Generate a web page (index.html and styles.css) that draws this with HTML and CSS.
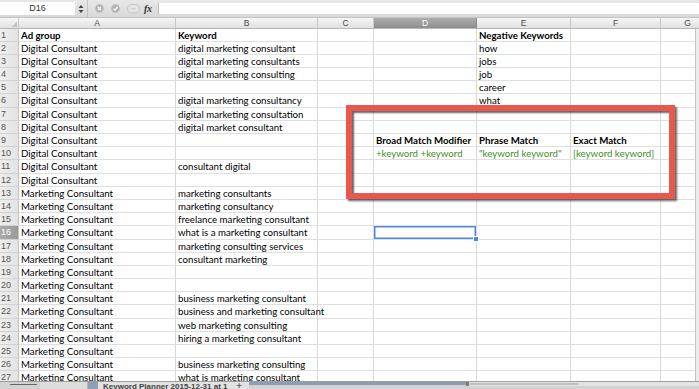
FILE: index.html
```html
<!DOCTYPE html>
<html>
<head>
<meta charset="utf-8">
<link rel="stylesheet" href="styles.css">
</head>
<body>
<div class="window">
  <div class="fbar">
    <div class="namebox">D16</div>
    <div class="stepper">
      <svg width="6" height="10" viewBox="0 0 6 10"><path d="M3 1 L5.5 4 H0.5 Z M3 9 L5.5 6 H0.5 Z" fill="#444"/></svg>
    </div>
    <div class="fbtns">
      <svg width="56" height="17" viewBox="0 0 56 17">
        <circle cx="12.5" cy="8.5" r="4.2" fill="#b4b4b4"/>
        <path d="M10.9 6.9 L14.1 10.1 M14.1 6.9 L10.9 10.1" stroke="#fff" stroke-width="1.2"/>
        <circle cx="28.5" cy="8.5" r="4.2" fill="#b4b4b4"/>
        <path d="M26.4 8.6 L28 10.2 L30.7 6.8" stroke="#fff" stroke-width="1.2" fill="none"/>
        <rect x="40.5" y="4.5" width="12" height="8.5" rx="4.25" fill="#e4e4e4" stroke="#c4c4c4"/>
        <path d="M44.5 8.7 H48.5" stroke="#c4c4c4"/>
      </svg>
      <span class="fx">fx</span>
    </div>
    <div class="finput"></div>
  </div>

  <div class="colheads">
    <div class="corner"></div>
    <div class="ch">A</div>
    <div class="ch">B</div>
    <div class="ch">C</div>
    <div class="ch on">D</div>
    <div class="ch">E</div>
    <div class="ch">F</div>
    <div class="ch">G</div>
  </div>

  <div class="body">
    <div class="rows">
      <div class="rh">1</div><div class="c b">Ad group</div><div class="c b">Keyword</div><div class="c"></div><div class="c"></div><div class="c b">Negative Keywords</div><div class="c"></div><div class="c"></div>
      <div class="rh">2</div><div class="c">Digital Consultant</div><div class="c">digital marketing consultant</div><div class="c"></div><div class="c"></div><div class="c">how</div><div class="c"></div><div class="c"></div>
      <div class="rh">3</div><div class="c">Digital Consultant</div><div class="c">digital marketing consultants</div><div class="c"></div><div class="c"></div><div class="c">jobs</div><div class="c"></div><div class="c"></div>
      <div class="rh">4</div><div class="c">Digital Consultant</div><div class="c">digital marketing consulting</div><div class="c"></div><div class="c"></div><div class="c">job</div><div class="c"></div><div class="c"></div>
      <div class="rh">5</div><div class="c">Digital Consultant</div><div class="c"></div><div class="c"></div><div class="c"></div><div class="c">career</div><div class="c"></div><div class="c"></div>
      <div class="rh">6</div><div class="c">Digital Consultant</div><div class="c">digital marketing consultancy</div><div class="c"></div><div class="c"></div><div class="c">what</div><div class="c"></div><div class="c"></div>
      <div class="rh">7</div><div class="c">Digital Consultant</div><div class="c">digital marketing consultation</div><div class="c"></div><div class="c"></div><div class="c"></div><div class="c"></div><div class="c"></div>
      <div class="rh">8</div><div class="c">Digital Consultant</div><div class="c">digital market consultant</div><div class="c"></div><div class="c"></div><div class="c"></div><div class="c"></div><div class="c"></div>
      <div class="rh">9</div><div class="c">Digital Consultant</div><div class="c"></div><div class="c"></div><div class="c b">Broad Match Modifier</div><div class="c b">Phrase Match</div><div class="c b">Exact Match</div><div class="c"></div>
      <div class="rh">10</div><div class="c">Digital Consultant</div><div class="c"></div><div class="c"></div><div class="c g">+keyword +keyword</div><div class="c g">"keyword keyword"</div><div class="c g">[keyword keyword]</div><div class="c"></div>
      <div class="rh">11</div><div class="c">Digital Consultant</div><div class="c">consultant digital</div><div class="c"></div><div class="c"></div><div class="c"></div><div class="c"></div><div class="c"></div>
      <div class="rh">12</div><div class="c">Digital Consultant</div><div class="c"></div><div class="c"></div><div class="c"></div><div class="c"></div><div class="c"></div><div class="c"></div>
      <div class="rh">13</div><div class="c">Marketing Consultant</div><div class="c">marketing consultants</div><div class="c"></div><div class="c"></div><div class="c"></div><div class="c"></div><div class="c"></div>
      <div class="rh">14</div><div class="c">Marketing Consultant</div><div class="c">marketing consultancy</div><div class="c"></div><div class="c"></div><div class="c"></div><div class="c"></div><div class="c"></div>
      <div class="rh">15</div><div class="c">Marketing Consultant</div><div class="c">freelance marketing consultant</div><div class="c"></div><div class="c"></div><div class="c"></div><div class="c"></div><div class="c"></div>
      <div class="rh on">16</div><div class="c">Marketing Consultant</div><div class="c">what is a marketing consultant</div><div class="c"></div><div class="c active"></div><div class="c"></div><div class="c"></div><div class="c"></div>
      <div class="rh">17</div><div class="c">Marketing Consultant</div><div class="c">marketing consulting services</div><div class="c"></div><div class="c"></div><div class="c"></div><div class="c"></div><div class="c"></div>
      <div class="rh">18</div><div class="c">Marketing Consultant</div><div class="c">consultant marketing</div><div class="c"></div><div class="c"></div><div class="c"></div><div class="c"></div><div class="c"></div>
      <div class="rh">19</div><div class="c">Marketing Consultant</div><div class="c"></div><div class="c"></div><div class="c"></div><div class="c"></div><div class="c"></div><div class="c"></div>
      <div class="rh">20</div><div class="c">Marketing Consultant</div><div class="c"></div><div class="c"></div><div class="c"></div><div class="c"></div><div class="c"></div><div class="c"></div>
      <div class="rh">21</div><div class="c">Marketing Consultant</div><div class="c">business marketing consultant</div><div class="c"></div><div class="c"></div><div class="c"></div><div class="c"></div><div class="c"></div>
      <div class="rh">22</div><div class="c">Marketing Consultant</div><div class="c">business and marketing consultant</div><div class="c"></div><div class="c"></div><div class="c"></div><div class="c"></div><div class="c"></div>
      <div class="rh">23</div><div class="c">Marketing Consultant</div><div class="c">web marketing consulting</div><div class="c"></div><div class="c"></div><div class="c"></div><div class="c"></div><div class="c"></div>
      <div class="rh">24</div><div class="c">Marketing Consultant</div><div class="c">hiring a marketing consultant</div><div class="c"></div><div class="c"></div><div class="c"></div><div class="c"></div><div class="c"></div>
      <div class="rh">25</div><div class="c">Marketing Consultant</div><div class="c"></div><div class="c"></div><div class="c"></div><div class="c"></div><div class="c"></div><div class="c"></div>
      <div class="rh">26</div><div class="c">Marketing Consultant</div><div class="c">business marketing consulting</div><div class="c"></div><div class="c"></div><div class="c"></div><div class="c"></div><div class="c"></div>
      <div class="rh">27</div><div class="c">Marketing Consultant</div><div class="c">what is marketing consultant</div><div class="c"></div><div class="c"></div><div class="c"></div><div class="c"></div><div class="c"></div>
    </div>
    <div class="vscroll"></div>
  </div>

  <div class="tabs">
    <div class="nav"><span class="navline"></span></div>
    <div class="prevtab"></div>
    <div class="tab"><span class="tabicon"></span><span class="tabtext">Keyword Planner 2015-12-31 at 1</span><span class="plus">+</span></div>
    <div class="hbar"></div>
    <div class="track"><span class="thumb"></span></div>
  </div>

  <div class="annot"></div>
</div>
</body>
</html>
```

FILE: styles.css
```css
html, body {
  margin: 0;
  padding: 0;
}
body {
  width: 699px;
  height: 389px;
  overflow: hidden;
  background: #fff;
  font-family: Lato, "Liberation Sans", sans-serif;
}
.window {
  position: relative;
  display: flex;
  flex-direction: column;
  width: 699px;
  height: 389px;
  overflow: hidden;
}

/* formula bar */
.fbar {
  flex: none;
  height: 18px;
  box-sizing: border-box;
  display: flex;
  align-items: center;
  background: linear-gradient(#e8e8e8, #d8d8d8);
  border-bottom: 1px solid #c4c4c4;
}
.namebox {
  width: 75px;
  height: 13px;
  background: #fff;
  font: 9px "Liberation Sans", sans-serif;
  line-height: 13px;
  color: #333;
  text-align: center;
}
.stepper {
  width: 13px;
  height: 17px;
  display: flex;
  align-items: center;
  justify-content: center;
  box-sizing: border-box;
  border-right: 1px solid #c2c2c2;
}
.fbtns {
  width: 70px;
  height: 17px;
  display: flex;
  align-items: center;
}
.fbtns svg {
  display: block;
  margin-left: -1px;
}
.fx {
  font: italic bold 10px "Liberation Serif", serif;
  color: #333;
  margin-left: 1px;
  letter-spacing: -0.3px;
}
.finput {
  flex: 1;
  height: 11px;
  background: #fff;
  border-left: 1px solid #b9b9b9;
}

/* column headers */
.colheads {
  flex: none;
  height: 10.5px;
  display: grid;
  grid-template-columns: 19px 157px 142px 56px 103px 94px 90px 54px;
  overflow: hidden;
}
.corner, .ch {
  box-sizing: border-box;
  border-right: 1px solid #c8c8c8;
  border-bottom: 1px solid #b8b8b8;
  background: linear-gradient(#f6f6f6, #e0e0e0);
}
.corner {
  background:
    linear-gradient(to top left, #c4c4c4 50%, transparent 50%) right 1px bottom 1px / 6px 6px no-repeat,
    linear-gradient(#f6f6f6, #e0e0e0);
}
.ch {
  font: 8.5px "Liberation Sans", sans-serif;
  line-height: 10px;
  color: #4a4a4a;
  text-align: center;
}
.ch.on {
  background: linear-gradient(#adadad, #8e8e8e);
  border-right-color: #8a8a8a;
  color: #fff;
}

/* rows */
.body {
  flex: none;
  height: 352.5px;
  display: flex;
  overflow: hidden;
}
.rows {
  flex: 1;
  display: grid;
  grid-template-columns: 19px 157px 142px 56px 103px 94px 90px 54px;
  grid-auto-rows: 13.2px;
  overflow: hidden;
}
.rh {
  box-sizing: border-box;
  background: linear-gradient(to right, #eeeeee, #e3e3e3);
  border-right: 1px solid #c2c2c2;
  border-bottom: 1px solid #d2d2d2;
  font: 9px "Liberation Sans", sans-serif;
  line-height: 13px;
  color: #555;
  padding-left: 1px;
}
.rh.on {
  background: linear-gradient(to right, #aaaaaa, #9a9a9a);
  color: #fff;
}
.c {
  box-sizing: border-box;
  border-right: 1px solid #d8d8d8;
  border-bottom: 1px solid #dfdfdf;
  font-size: 9.7px;
  line-height: 12.6px;
  padding-left: 2px;
  white-space: nowrap;
  color: #000;
}
.c.b {
  font-weight: bold;
}
.c.g {
  color: #3f9022;
}
.c.active {
  position: relative;
  box-shadow: inset 0 0 0 1.5px #4d8ae6;
}
.c.active::after {
  content: "";
  position: absolute;
  right: -3px;
  bottom: -3px;
  width: 4px;
  height: 4px;
  background: #4d8ae6;
  border: 1px solid #fff;
  z-index: 2;
}
.vscroll {
  flex: none;
  width: 4px;
  box-sizing: border-box;
  background: #ececec;
  border-left: 1px solid #c4c4c4;
}

/* sheet tabs + horizontal scrollbar */
.tabs {
  flex: none;
  height: 8px;
  box-sizing: border-box;
  display: flex;
  background: #d2d2d2;
  border-top: 1px solid #9d9d9d;
  overflow: hidden;
}
.nav {
  width: 40px;
  padding-top: 2px;
  box-sizing: border-box;
}
.navline {
  display: block;
  margin-left: 10px;
  width: 27px;
  height: 1px;
  background: #666;
}
.prevtab {
  width: 47px;
  background: #dcdcdc;
  border-right: 1px solid #b4b4b4;
}
.tab {
  width: 161px;
  display: flex;
  align-items: flex-start;
  background: #e2e2e2;
}
.tabicon {
  width: 10px;
  height: 7px;
  background: #8f9fb6;
}
.tabtext {
  margin-left: 5px;
  font: bold 8px "Liberation Sans", sans-serif;
  line-height: 10px;
  color: #444;
  white-space: nowrap;
}
.plus {
  margin-left: 9px;
  font: bold 9px "Liberation Sans", sans-serif;
  line-height: 9px;
  color: #666;
}
.hbar {
  width: 217px;
  height: 3px;
  background: #8e9db4;
}
.track {
  flex: 1;
  height: 4px;
  background: #e4e4e4;
  border-left: 3px solid #7d7d7d;
}
.thumb {
  display: block;
  width: 110px;
  height: 2px;
  margin-top: 1px;
  background: #fafafa;
  border-radius: 2px;
  border: 1px solid #bdbdbd;
  box-sizing: border-box;
}

/* red annotation rectangle over the sheet */
.annot {
  position: absolute;
  left: 346px;
  top: 105px;
  width: 329px;
  height: 94px;
  box-sizing: border-box;
  border: 6px solid #e8584c;
  box-shadow: 2px 2px 2px rgba(0, 0, 0, 0.6), inset 2px 2px 2px rgba(0, 0, 0, 0.6);
  pointer-events: none;
}
```
